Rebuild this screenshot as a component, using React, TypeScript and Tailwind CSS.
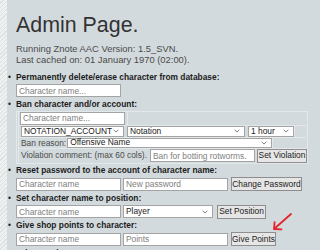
import React from 'react';

// Select-lookalike chevron
const Chevron = () => (
  <svg width="6" height="4" viewBox="0 0 6 4" className="shrink-0">
    <path d="M0.6 0.7 L3 3.1 L5.4 0.7" fill="none" stroke="#6e6e6e" strokeWidth="0.9" />
  </svg>
);

function TextBox({ placeholder, w }: { placeholder: string; w: string }) {
  return (
    <input
      readOnly
      placeholder={placeholder}
      className={`h-[13px] ${w} shrink-0 border border-[#a4a4a4] bg-white px-[2px] text-[8.4px] leading-none text-[#222] outline-none placeholder:text-[#808080]`}
    />
  );
}

function SelectBox({ value, w, h = 'h-[13px]' }: { value: string; w: string; h?: string }) {
  return (
    <div
      className={`flex ${h} ${w} shrink-0 items-center justify-between border border-[#a4a4a4] bg-white pl-[2px] pr-[4px] text-[8.4px] leading-none text-[#222]`}
    >
      <span className="whitespace-nowrap">{value}</span>
      <Chevron />
    </div>
  );
}

function Btn({ label, w }: { label: string; w: string }) {
  return (
    <button
      className={`h-[14px] ${w} shrink-0 whitespace-nowrap border border-[#8e8e8e] bg-[#e6e6e6] text-[8.4px] leading-none text-[#222]`}
    >
      {label}
    </button>
  );
}

function Item({ title, children }: { title: string; children: React.ReactNode }) {
  return (
    <li>
      <div className="flex h-[11px] items-center text-[8.4px] font-bold leading-[11px] text-[#1c1c1c]">
        <span className="-ml-[9px] w-[9px] pl-[1px] font-normal">•</span>
        <span className="whitespace-nowrap">{title}</span>
      </div>
      <div className="mt-[1px]">{children}</div>
    </li>
  );
}

export default function App() {
  return (
    <div className="relative flex h-[250px] w-full overflow-hidden bg-[#d3dadd] font-['Liberation_Sans',Arial,sans-serif]">
      {/* textured side strip */}
      <div className="w-[7px] shrink-0 bg-[repeating-linear-gradient(135deg,#eff1f1_0px,#eff1f1_2px,#dde1e1_2px,#dde1e1_3px)]" />

      <div className="flex-1 pl-[9px] pt-[13px]">
        <h1 className="text-[21.4px] font-normal leading-[25px] text-[#333]">Admin Page.</h1>
        <p className="mt-[5px] text-[9.4px] leading-[11px] text-[#4a4a4a]">
          Running Znote AAC Version: 1.5_SVN.
          <br />
          Last cached on: 01 January 1970 (02:00).
        </p>

        <ul className="mt-[7px] flex flex-col gap-[1.5px]">
          <Item title="Permanently delete/erase character from database:">
            <div className="flex h-[13px] items-center">
              <TextBox placeholder="Character name..." w="w-[105px]" />
            </div>
          </Item>

          <Item title="Ban character and/or account:">
            <div className="w-[292px] border border-[#e3e8ea] px-[1px] text-[8.4px] leading-none text-[#4a4a4a]">
              <div className="flex h-[14px] border-b border-[#e3e8ea]">
                <div className="flex items-center border-x border-[#e3e8ea] pl-[1px] pr-[2px]">
                  <TextBox placeholder="Character name..." w="w-[105px]" />
                </div>
              </div>
              <div className="flex h-[12px] border-b border-[#e3e8ea]">
                <div className="flex items-start border-x border-[#e3e8ea] pl-[2px]">
                  <SelectBox value="NOTATION_ACCOUNT" w="w-[103px]" h="h-[11px]" />
                  <div className="ml-[3px]">
                    <SelectBox value="Notation" w="w-[118px]" h="h-[11px]" />
                  </div>
                  <div className="ml-[3px]">
                    <SelectBox value="1 hour" w="w-[46px]" h="h-[11px]" />
                  </div>
                </div>
              </div>
              <div className="flex h-[11px] border-b border-[#e3e8ea]">
                <div className="flex items-start border-x border-[#e3e8ea] pl-[2px]">
                  <span className="whitespace-nowrap leading-[10px]">Ban reason:</span>
                  <div className="ml-[1px]">
                    <SelectBox value="Offensive Name" w="w-[205px]" h="h-[10px]" />
                  </div>
                </div>
              </div>
              <div className="flex h-[14px]">
                <div className="flex flex-1 items-center border-x border-[#e3e8ea] pl-[2px]">
                  <span className="whitespace-nowrap">Violation comment: (max 60 cols).</span>
                  <div className="ml-[3px] flex">
                    <TextBox placeholder="Ban for botting rotworms." w="w-[105px]" />
                  </div>
                  <div className="ml-[2px] flex">
                    <Btn label="Set Violation" w="w-[50px]" />
                  </div>
                </div>
              </div>
            </div>
          </Item>

          <Item title="Reset password to the account of character name:">
            <div className="flex h-[14px] items-center">
              <TextBox placeholder="Character name" w="w-[105px]" />
              <div className="ml-[2px] flex">
                <TextBox placeholder="New password" w="w-[105px]" />
              </div>
              <div className="ml-[3px] flex">
                <Btn label="Change Password" w="w-[71px]" />
              </div>
            </div>
          </Item>

          <Item title="Set character name to position:">
            <div className="flex h-[14px] items-center">
              <TextBox placeholder="Character name" w="w-[105px]" />
              <div className="ml-[2px] flex">
                <SelectBox value="Player" w="w-[90px]" />
              </div>
              <div className="ml-[4px] flex">
                <Btn label="Set Position" w="w-[49px]" />
              </div>
            </div>
          </Item>

          <Item title="Give shop points to character:">
            <div className="flex h-[14px] items-center">
              <TextBox placeholder="Character name" w="w-[105px]" />
              <div className="ml-[2px] flex">
                <TextBox placeholder="Points" w="w-[105px]" />
              </div>
              <div className="ml-[3px] flex">
                <Btn label="Give Points" w="w-[45px]" />
              </div>
            </div>
          </Item>

          <Item title="Teleport Player:">
            <div className="flex h-[14px] items-center">
              <TextBox placeholder="Character name" w="w-[105px]" />
            </div>
          </Item>
        </ul>
      </div>

      {/* red annotation arrow */}
      <svg className="absolute left-[268px] top-[210px] h-[24px] w-[26px]" viewBox="0 0 26 24">
        <path
          d="M23 4 L6 19 M6 19 L6.6 12.2 M6 19 L13.4 19.4"
          fill="none"
          stroke="#e3242b"
          strokeWidth="1.8"
          strokeLinecap="round"
          strokeLinejoin="round"
        />
      </svg>
    </div>
  );
}
